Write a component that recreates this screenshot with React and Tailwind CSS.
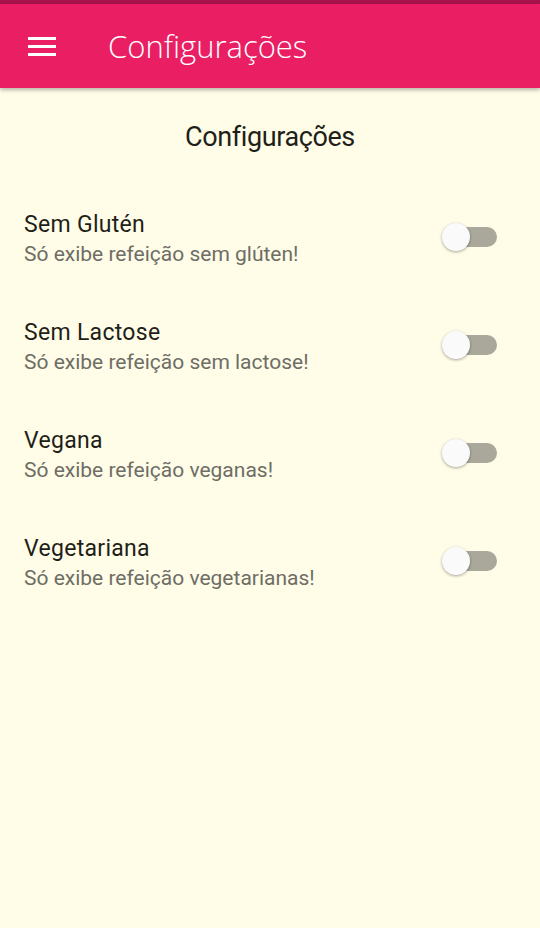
const filters = [
  { title: "Sem Glutén", subtitle: "Só exibe refeição sem glúten!" },
  { title: "Sem Lactose", subtitle: "Só exibe refeição sem lactose!" },
  { title: "Vegana", subtitle: "Só exibe refeição veganas!" },
  { title: "Vegetariana", subtitle: "Só exibe refeição vegetarianas!" },
];

const Switch = () => (
  <div className="relative w-[56px] h-[30px] flex items-center">
    <div className="ml-[2px] w-[52px] h-[20px] rounded-full bg-[#a9a89a]" />
    <div className="absolute left-[-1px] top-[1px] w-[28px] h-[28px] rounded-full bg-[#fafafa] shadow-[0_1px_3px_rgba(0,0,0,0.35)]" />
  </div>
);

const App = () => {
  return (
    <div className="w-[540px] h-[928px] bg-[#fffde7] flex flex-col" style={{ fontFamily: "Roboto, sans-serif" }}>
      <div className="h-[4px] bg-[#a8134b]" />
      <header className="h-[84px] bg-[#e91e63] flex items-center shadow-[0_2px_4px_rgba(0,0,0,0.3)] relative z-10">
        <div className="w-[28px] ml-[28px] flex flex-col gap-[5px]">
          <span className="h-[3px] bg-white" />
          <span className="h-[3px] bg-white" />
          <span className="h-[3px] bg-white" />
        </div>
        <h1
          className="ml-[52px] text-white text-[31px] font-light leading-none"
          style={{ fontFamily: "'Open Sans', Lato, sans-serif" }}
        >
          Configurações
        </h1>
      </header>
      <div className="h-[95px] pt-[4px] flex items-center justify-center">
        <h2 className="text-[27px] text-[#1f1f1a] tracking-[-0.4px] leading-none">Configurações</h2>
      </div>
      {filters.map((f) => (
        <div key={f.title} className="h-[108px] flex items-center justify-between pl-[24px] pr-[41px]">
          <div className="flex flex-col pt-[3px]">
            <span className="text-[23px] leading-[30px] text-[#1f1f1a] tracking-[0.3px]">{f.title}</span>
            <span className="text-[21px] leading-[28px] text-[#6e6d66]">{f.subtitle}</span>
          </div>
          <Switch />
        </div>
      ))}
    </div>
  );
};

export default App;
